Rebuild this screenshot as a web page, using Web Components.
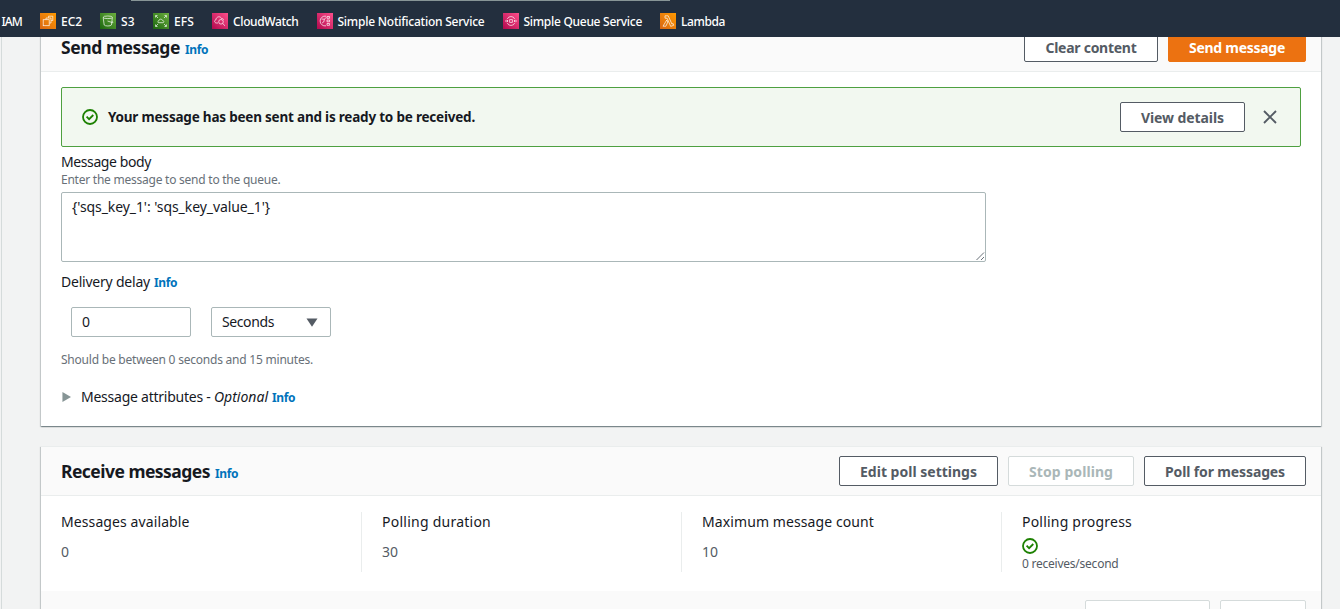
<!DOCTYPE html>
<html lang="en">
<head>
<meta charset="utf-8">
<title>Send and receive messages</title>
<style>
html,body{margin:0;height:609px;overflow:hidden;background:#f2f3f3}
body{font:14px/20px "Noto Sans","Open Sans",sans-serif;color:#16191f}
</style>
</head>
<body>
<sqs-page></sqs-page>
<script>
const define = (name, html, setup) => customElements.define(name, class extends HTMLElement {
  connectedCallback() {
    if (this.shadowRoot) return;
    const root = this.attachShadow({mode: 'open'});
    const t = document.createElement('template');
    t.innerHTML = html;
    root.append(t.content.cloneNode(true));
    if (setup) setup(this, root);
  }
});

/* One line of text, tracked to a given measure. */
define('text-line', `<style>:host{display:inline-block;white-space:pre;flex:none}span{display:inline-block}</style><span><slot></slot></span>`, (el, root) => {
  const w = parseFloat(el.getAttribute('w'));
  const span = root.querySelector('span');
  const natural = span.getBoundingClientRect().width;
  span.style.letterSpacing = ((w - natural) / el.textContent.length).toFixed(3) + 'px';
  el.style.width = w + 'px';
});

define('info-link', `<style>:host{display:inline-block;font-size:12px;font-weight:700;font-style:normal;color:#0073bb}</style><text-line w="23">Info</text-line>`);

const glyphs = {
  ec2: `<rect x="3.2" y="6.7" width="6" height="6"/><path d="M6 6.5V5h5v5H9.500M8.500 4.800V3.200h4.300v4.300H11.200"/>`,
  s3: `<ellipse cx="7.800" cy="4.300" rx="4.600" ry="1.300"/><path d="M3.200 4.500l1 7.500c.6 1.300 6.600 1.300 7.200 0l1-7.500M7.500 8l5.200 1.700c.6-.2.300-.9-.5-1.300"/>`,
  efs: `<path d="M2.500 4.500v-2h2M11.500 2.500h2v2M2.500 11.500v2h2M11.500 13.500h2v-2M3 3l2 2M13 3l-2 2M3 13l2-2M13 13l-2-2M5.300 9.700c-1.200-1 .1-2 .6-2 .2-1.800 2.900-2.200 3.500-.4 1.400-.2 2.100 2.300.5 2.400z"/>`,
  cw: `<path d="M6 10H4.200C2 9.500 2.200 7.200 3.900 6.900 4 3.400 8.700 2.700 9.500 5.600c1.200-.2 2 .2 2.100 1.100"/><circle cx="9" cy="8.800" r="2.300"/><path d="M10.700 10.500l2.300 2.300"/>`,
  sns: `<path d="M9 3.200a4.900 4.900 0 1 0 0 9.600M4.500 6l3 .3L6.700 9 5 10M7.500 6.200L9 4.500M10 3.500h2.500v1.800H10zM10 7h2.500v1.800H10zM10 10.500h2.500v1.800H10z"/>`,
  sqs: `<path d="M4.300 6a4 4 0 0 1 7.400 0M4.300 10a4 4 0 0 0 7.400 0M2 8h3M11 8h3M3.800 7L5 8 3.800 9M12.200 7L11 8l1.200 1"/><rect x="6.700" y="6.700" width="2.600" height="2.600"/>`,
  lambda: `<path d="M5 2.800h3.200l3.700 8.200 1.200-.4.600 1.700-3 1.100-3.600-8.200H5zM6.800 7l1 2-1.900 4.200H3z"/>`
};
const tints = {ec2:['#d86613','#ff9a00'],lambda:['#d86613','#ff9a00'],s3:['#1b660f','#6cae3e'],efs:['#1b660f','#6cae3e'],cw:['#b0084d','#ff4f8b'],sns:['#b0084d','#ff4f8b'],sqs:['#b0084d','#ff4f8b']};

define('service-link', `<style>:host{display:flex;align-items:center;gap:5px}svg{display:block;width:16px;height:16px}</style><svg viewBox="0 0 16 16"></svg><slot></slot>`, (el, root) => {
  const k = el.getAttribute('icon'), svg = root.querySelector('svg');
  if (!k) { svg.remove(); return; }
  svg.innerHTML = `<defs><linearGradient id="g" x1="0" y1="1" x2="1" y2="0"><stop stop-color="${tints[k][0]}"/><stop offset="1" stop-color="${tints[k][1]}"/></linearGradient></defs><rect width="16" height="16" fill="url(#g)"/><g fill="none" stroke="#fff" stroke-width=".75" stroke-opacity=".9">${glyphs[k]}</g>`;
});

define('service-bar', `<style>
:host{display:flex;flex:none;box-sizing:border-box;height:37px;background:#232f3e;color:#fff;font-size:12px;font-weight:500;line-height:16px;padding:5px 0 0 1.5px;gap:18px;align-items:center;position:relative}
i{position:absolute;left:131px;top:0;width:539px;height:1px;background:#879596}
text-line{padding-top:2px}
</style><i></i>
<service-link><text-line w="20.5">IAM</text-line></service-link>
<service-link icon="ec2"><text-line w="21">EC2</text-line></service-link>
<service-link icon="s3"><text-line w="14">S3</text-line></service-link>
<service-link icon="efs"><text-line w="20">EFS</text-line></service-link>
<service-link icon="cw"><text-line w="65.5">CloudWatch</text-line></service-link>
<service-link icon="sns"><text-line w="147">Simple Notification Service</text-line></service-link>
<service-link icon="sqs"><text-line w="118.5">Simple Queue Service</text-line></service-link>
<service-link icon="lambda"><text-line w="44">Lambda</text-line></service-link>`);

define('ui-button', `<style>
:host{display:flex;box-sizing:border-box;height:30px;padding:1px 20px 0;border:1px solid #545b64;border-radius:2px;background:#fff;color:#545b64;font-weight:700;font-size:14px;line-height:20px;align-items:center;justify-content:center;flex:none}
:host([primary]){background:#ec7211;border-color:#ec7211;color:#fff}
:host([disabled]){border-color:#d5dbdb;color:#aab7b8}
</style><slot></slot>`);

define('status-icon', `<style>:host{display:block;width:16px;height:16px;flex:none}svg{display:block}</style><svg width="16" height="16" viewBox="0 0 16 16" fill="none" stroke="#1d8102" stroke-width="1.800"><circle cx="8" cy="8" r="7"/><path d="M4.600 7.700l2.500 2.500 4.200-4.200"/></svg>`);

define('success-alert', `<style>
:host{display:flex;box-sizing:border-box;height:60px;border:1px solid #4ea040;border-radius:2px;background:#f2f8f0;align-items:center;padding:0 23px 0 20px}
.m{margin-left:10px;font-weight:700;font-size:13.5px;flex:1}.x{display:block;margin-left:18px}
</style><status-icon></status-icon><div class="m"><slot></slot></div>
<ui-button><text-line w="83">View details</text-line></ui-button>
<svg class="x" width="14" height="14" viewBox="0 0 14 14" stroke="#545b64" stroke-width="1.900"><path d="M1 1l12 12M13 1L1 13"/></svg>`);

define('ui-card', `<style>
:host{display:block;background:#fff;box-shadow:0 1px 1px 0 rgba(0,28,36,.3),1px 1px 1px 0 rgba(0,28,36,.15),-1px 1px 1px 0 rgba(0,28,36,.15);border-top:1px solid #eaeded;box-sizing:border-box;flex:none}
header{box-sizing:border-box;height:49px;background:#fafafa;border-bottom:1px solid #eaeded;padding:0 15px 0 20px;display:flex;align-items:center;gap:10px}
.h{flex:1;display:flex;gap:5px;align-items:baseline;font-size:17.5px;line-height:20px;font-weight:700;padding-top:2px}
.a{display:flex;gap:10px}
</style><header><div class="h"><slot name="title"></slot><info-link></info-link></div><div class="a"><slot name="actions"></slot></div></header><slot></slot>`);

define('field-box', `<style>
:host{display:flex;box-sizing:border-box;width:120px;height:30px;border:1px solid #aab7b8;border-radius:2px;background:#fff;padding:0 10px;align-items:center;justify-content:space-between}
:host([area]){width:925px;height:70px;align-items:flex-start;padding-top:4px;position:relative}
svg{display:none}
:host([area]) .grip{display:block;position:absolute;right:0;bottom:0}
:host([select]) .caret{display:block;margin-right:2px}
</style><slot></slot><svg class="caret" width="12" height="9" viewBox="0 0 12 9"><path d="M.5.500h11L6 8.700z" fill="#545b64"/></svg>
<svg class="grip" width="10" height="9" viewBox="0 0 10 9" stroke="#687078" stroke-width="1"><path d="M1.500 8L9 .500M6 8l3-3"/></svg>`);

define('metric-cell', `<style>
:host{display:block;box-sizing:border-box;height:60px;border-left:1px solid #eaeded;padding-left:20px}
:host([first]){border-left-color:transparent;padding-left:19px}
.l{height:20px;display:block;font-size:14px}
.v{display:block;padding-top:10px;color:#545b64}
:host([progress]) .v{padding-top:6px;font-size:12px;line-height:16px}
</style><div class="l"><slot name="label"></slot></div><div class="v"><slot></slot></div>`);

define('sqs-page', `<style>
:host{display:flex;flex-direction:column;height:609px;overflow:hidden;background:#f2f3f3}
main{flex:1;min-height:0;overflow:hidden;margin-left:1px;border-left:1px solid #d5dbdb;padding:0 19px 0 39px;display:flex;flex-direction:column}
.send{margin-top:-15px;height:404px}
.body{padding:15px 20px 0;display:flex;flex-direction:column}
.sub{color:#687078;font-size:12px;line-height:16px}
.row{display:flex}.base{align-items:baseline;gap:4px}
.metrics{display:grid;grid-template-columns:repeat(4,320px);padding:16px 0 19px}
.foot{height:40px;background:#fafafa;display:flex;justify-content:flex-end;gap:10px;padding:9px 15px 0}
</style>
<service-bar></service-bar>
<main>
<ui-card class="send">
  <text-line slot="title" w="119">Send message</text-line>
  <ui-button slot="actions" style="width:134px"><text-line w="91">Clear content</text-line></ui-button>
  <ui-button slot="actions" primary style="width:138px"><text-line w="96">Send message</text-line></ui-button>
  <div class="body">
    <success-alert><text-line w="367">Your message has been sent and is ready to be received.</text-line></success-alert>
    <div style="margin-top:5px;height:20px"><text-line w="90">Message body</text-line></div>
    <div class="sub" style="height:20px"><text-line w="219.5">Enter the message to send to the queue.</text-line></div>
    <field-box area><text-line w="198">{'sqs_key_1': 'sqs_key_value_1'}</text-line></field-box>
    <div class="row base" style="margin-top:10px"><text-line w="89">Delivery delay</text-line><info-link></info-link></div>
    <div class="row" style="padding:14px 10px 0;gap:20px"><field-box><text-line w="8">0</text-line></field-box><field-box select><text-line w="52">Seconds</text-line></field-box></div>
    <div class="sub" style="margin-top:15px"><text-line w="252">Should be between 0 seconds and 15 minutes.</text-line></div>
    <div class="row" style="margin-top:19px;align-items:baseline">
      <svg width="10" height="10" viewBox="0 0 10 10" style="margin:0 10px 0 1px;width:9px;height:10px" preserveAspectRatio="none"><path d="M.5 0L10 5 .5 10z" fill="#879596"/></svg>
      <text-line w="133">Message attributes - </text-line><text-line w="54" style="font-style:italic">Optional</text-line><info-link style="margin-left:4px"></info-link>
    </div>
  </div>
</ui-card>
<ui-card style="margin-top:20px">
  <text-line slot="title" w="149">Receive messages</text-line>
  <ui-button slot="actions" style="width:159px"><text-line w="117">Edit poll settings</text-line></ui-button>
  <ui-button slot="actions" disabled style="width:126px"><text-line w="84">Stop polling</text-line></ui-button>
  <ui-button slot="actions" style="width:162px"><text-line w="120">Poll for messages</text-line></ui-button>
  <div class="metrics">
    <metric-cell first><text-line slot="label" w="128.5">Messages available</text-line><text-line w="8">0</text-line></metric-cell>
    <metric-cell><text-line slot="label" w="109">Polling duration</text-line><text-line w="16">30</text-line></metric-cell>
    <metric-cell><text-line slot="label" w="172">Maximum message count</text-line><text-line w="16">10</text-line></metric-cell>
    <metric-cell progress><text-line slot="label" w="110">Polling progress</text-line><status-icon></status-icon><text-line w="96.5" style="margin-top:2px">0 receives/second</text-line></metric-cell>
  </div>
  <div class="foot"><ui-button disabled style="width:125px"></ui-button><ui-button disabled style="width:86px"></ui-button></div>
</ui-card>
</main>`);
</script>
</body>
</html>
